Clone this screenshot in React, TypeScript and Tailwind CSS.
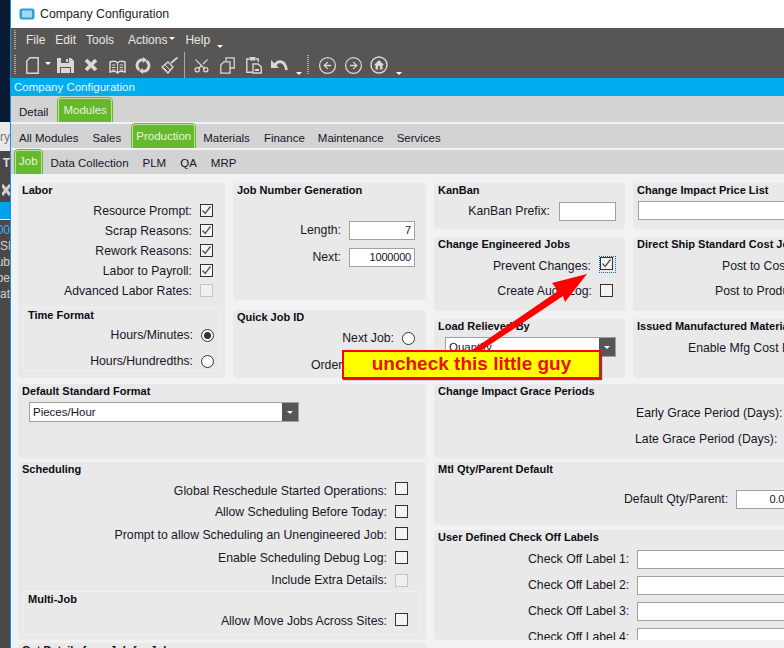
import { CircleArrowLeft, CircleArrowRight, Scissors } from 'lucide-react'
import type { ReactNode } from 'react'

function Check({ on, off, focus, lift = 'mb-[2px]' }: { on?: boolean; off?: boolean; focus?: boolean; lift?: string }) {
  const box = (
    <span
      className={`flex h-[13px] w-[13px] items-center justify-center border ${off ? 'border-[#c4c4c4] bg-[#f1f1f1]' : 'border-[#333333] bg-[#f4f4f4]'}`}
    >
      {on && (
        <svg width="11" height="11" viewBox="0 0 11 11">
          <path d="M1.5 5.5 L4.2 8.5 L9.5 1.5" fill="none" stroke="#555555" strokeWidth="1.4" />
        </svg>
      )}
    </span>
  )
  if (focus) return <span className="-my-[2px] -mr-[3px] mb-[1px] border border-dotted border-[#1565c0] pb-[2px] pr-[2px]">{box}</span>
  return <span className={lift}>{box}</span>
}

function Radio({ on }: { on?: boolean }) {
  return (
    <span className="flex h-[13px] w-[13px] items-center justify-center rounded-full border border-[#333333] bg-white">
      {on && <span className="h-[7px] w-[7px] rounded-full bg-[#333333]" />}
    </span>
  )
}

function Input({ value, className }: { value?: string; className: string }) {
  return (
    <span className={`flex h-[19px] items-center justify-end border border-[#a0a0a0] bg-white px-[3px] text-[11px] tracking-[-0.2px] ${className}`}>
      {value}
    </span>
  )
}

function Combo({ value, className }: { value: string; className: string }) {
  return (
    <span className={`flex h-[20px] items-center border border-[#a0a0a0] bg-white pl-[3px] text-[11.5px] ${className}`}>
      <span className="flex-1 pt-px">{value}</span>
      <span className="flex h-full w-[16px] items-center justify-center bg-[#585654]">
        <span className="h-0 w-0 border-x-[3px] border-t-[3px] border-x-transparent border-t-white" />
      </span>
    </span>
  )
}

function Row({ label, h = 20, pr = 12, gap = 8, children }: { label: string; h?: number; pr?: number; gap?: number; children: ReactNode }) {
  return (
    <div className="flex items-center justify-end whitespace-nowrap" style={{ height: h, paddingRight: pr, columnGap: gap }}>
      <span>{label}</span>
      {children}
    </div>
  )
}

function Panel({ title, className, children }: { title: string; className: string; children?: ReactNode }) {
  return (
    <div className={`shrink-0 overflow-hidden rounded-[4px] bg-[#e9e9e9] ${className}`}>
      <div className="whitespace-nowrap px-1 text-[11px] font-bold leading-[14px] text-[#0c0c14]">{title}</div>
      {children}
    </div>
  )
}

function Tab({ label, className = 'px-[7px] pt-[6px]' }: { label: string; className?: string }) {
  return <span className={`flex h-full items-center ${className}`}>{label}</span>
}

function ActiveTab({ label, className }: { label: string; className: string }) {
  return (
    <span className={`flex items-center rounded-t-[3px] border border-b-0 border-[#b9e69a] bg-[#66b82c] px-[3px] text-[#e6f7d8] outline outline-1 outline-[#66b82c] ${className}`}>
      {label}
    </span>
  )
}

function Grip({ className = '' }: { className?: string }) {
  return <span className={`h-[20px] w-[2px] bg-[repeating-linear-gradient(to_bottom,#a8a8a8_0,#a8a8a8_1px,transparent_1px,transparent_2px)] ${className}`} />
}

function Chevron({ className = '' }: { className?: string }) {
  return <span className={`h-0 w-0 border-x-[3px] border-t-[3px] border-x-transparent border-t-white ${className}`} />
}

function Toolbar() {
  const c = '#d8d8d8'
  return (
    <div className="flex h-[26px] items-center">
      <Grip />
      <svg width="13" height="17" viewBox="0 0 13 17" className="ml-[10px]">
        <path d="M4 .8H12.200V16.200H.8V4z" fill="none" stroke={c} strokeWidth="1.400" />
      </svg>
      <Chevron className="mb-1 ml-[6px]" />
      <svg width="17" height="17" viewBox="0 0 17 17" className="ml-[6px]">
        <path d="M0 1h14l3 3v12H0z" fill={c} />
        <path d="M4 1h8v5H4z" fill="#585654" />
        <path d="M9 2h2v3H9z" fill={c} />
        <path d="M3 10h11v6H3z" fill="#585654" />
        <path d="M4 11h9v5H4z" fill={c} />
      </svg>
      <svg width="14" height="14" viewBox="0 0 14 14" className="ml-[10px]">
        <path d="M2 2 L12 12 M12 2 L2 12" stroke={c} strokeWidth="3.800" />
      </svg>
      <svg width="17" height="14" viewBox="0 0 17 14" className="ml-[11px] mt-1">
        <path d="M1 2c3-1 6-1 7.500 1 1.500-2 4.500-2 7.500-1v10c-3-1-6-1-7.500 1-1.500-2-4.500-2-7.500-1z" fill="none" stroke={c} strokeWidth="1.500" />
        <path d="M8.500 3v9M3 5h3.500M3 7.500h3.500M3 10h3.500M10.500 5H14M10.500 7.500H14M10.500 10H14" stroke={c} />
      </svg>
      <svg width="16" height="17" viewBox="0 0 16 17" className="ml-[9px]">
        <path d="M8 2.800A5.600 5.600 0 0 0 4.500 13" fill="none" stroke={c} strokeWidth="2.800" />
        <path d="M8 14.200A5.600 5.600 0 0 0 11.500 4" fill="none" stroke={c} strokeWidth="2.800" />
        <path d="M8 0v6L12 3zM8 17v-6L4 14z" fill={c} />
      </svg>
      <svg width="17" height="17" viewBox="0 0 17 17" className="ml-[10px]">
        <path d="M16.500 .5 L10 6" stroke={c} strokeWidth="1.800" />
        <path d="M7 5 L12 10 L7 16 L1 10z" fill="none" stroke={c} strokeWidth="1.400" />
        <path d="M4 8 L9 13 M3 11l3 3" stroke={c} />
      </svg>
      <span className="ml-[6px] h-[26px] w-px bg-[#a8a8a8]" />
      <Scissors size={17} color={c} strokeWidth={1.800} className="ml-[8px] -rotate-90" />
      <svg width="15" height="17" viewBox="0 0 15 17" className="ml-[10px]">
        <path d="M6 4V.8H14.200V11H10" fill="none" stroke={c} strokeWidth="1.300" />
        <path d="M4 4.800H10V16.200H.8V8z" fill="none" stroke={c} strokeWidth="1.300" />
      </svg>
      <svg width="16" height="18" viewBox="0 0 16 18" className="ml-[11px]">
        <path d="M3 3H.8v13.200H6M10 3h2.200v3" fill="none" stroke={c} strokeWidth="1.400" />
        <path d="M3.500 1h6v3.500h-6z" fill={c} />
        <path d="M7 8h5l3.300 3v6H7z" fill="none" stroke={c} strokeWidth="1.400" />
        <path d="M9 13h4v2H9z" fill={c} />
      </svg>
      <svg width="17" height="14" viewBox="0 0 17 14" className="ml-[9px]">
        <path d="M4 7C7 2 14 2 15.500 12" fill="none" stroke={c} strokeWidth="2.800" />
        <path d="M0 2V10H8z" fill={c} />
      </svg>
      <Chevron className="ml-[8px] mt-4" />
      <Grip className="ml-[5px]" />
      <CircleArrowLeft size={19} color={c} strokeWidth={1.600} className="ml-[9px]" />
      <CircleArrowRight size={19} color={c} strokeWidth={1.600} className="ml-[7px]" />
      <svg width="18" height="18" viewBox="0 0 18 18" className="ml-[7px]">
        <circle cx="9" cy="9" r="8" fill="none" stroke={c} strokeWidth="1.400" />
        <path d="M9 4 L14 9 H12.500 V13.500 H5.500 V9 H4z" fill={c} />
        <path d="M8 10h2v3.500H8z" fill="#585654" />
      </svg>
      <Chevron className="ml-[8px] mt-4" />
    </div>
  )
}

function LeftStrip() {
  return (
    <div className="flex w-[11px] shrink-0 flex-col border-r border-[#1e90e0] text-[12px] leading-[16px]">
      <div className="h-[122px] bg-[#061a33]" />
      <div className="flex h-[29px] items-center justify-end overflow-hidden bg-[#e9e9e9] text-[#777777]">ry</div>
      <div className="flex h-[51px] flex-col items-end justify-between overflow-hidden bg-[#4a4846] pb-[6px] pt-[4px] font-bold text-[#dddddd]">
        <span>T</span>
        <svg width="8" height="12" viewBox="0 0 8 12">
          <path d="M0 1 L8 11 M8 1 L0 11" stroke="#cfcfcf" strokeWidth="3" />
        </svg>
      </div>
      <div className="h-[17px] bg-[#00a2e8]" />
      <div className="h-[1px] bg-white" />
      <div className="flex flex-1 flex-col items-end overflow-hidden bg-[#4a4846] pt-[2px] text-[#d0d0d0]">
        <span className="text-[#3db4f2]">00</span>
        <span className="self-start">SM</span>
        <span>ub</span>
        <span>pe</span>
        <span>at</span>
      </div>
    </div>
  )
}

export default function App() {
  return (
    <div className="relative flex h-[648px] w-[784px] overflow-hidden bg-white font-['Liberation_Sans',Arial,sans-serif] text-[12.25px] text-[#1a1428]">
      <LeftStrip />
      <div className="flex min-w-0 flex-1 flex-col">
        <div className="flex h-[28px] items-center gap-[5px] pl-[8px] text-[12.3px] text-[#222222]">
          <svg width="16" height="12" viewBox="0 0 16 12">
            <rect x="0.500" y="0.500" width="15" height="11" rx="2.500" fill="#2a9fd8" />
            <rect x="3" y="2.500" width="10" height="7" fill="#9ed8f2" />
          </svg>
          <span>Company Configuration</span>
        </div>

        <div className="flex h-[50px] flex-col bg-[#585654] text-[12px] text-[#e8e8e8]">
          <div className="flex h-[24px] items-center">
            <Grip className="ml-[3px]" />
            <span className="ml-[10px]">File</span>
            <span className="ml-[10px]">Edit</span>
            <span className="ml-[10px]">Tools</span>
            <span className="ml-[14px]">Actions</span>
            <Chevron className="mb-1 ml-[2px]" />
            <span className="ml-[10px]">Help</span>
            <Chevron className="ml-[7px] mt-3" />
          </div>
          <div className="pl-[3px]">
            <Toolbar />
          </div>
        </div>

        <div className="flex h-[18px] items-center bg-[#00adef] pl-[3px] pt-px text-[11.5px] text-[#e8f8ff]">Company Configuration</div>

        <div className="flex h-[26px] items-end bg-[#d3d3d3] pl-[1px] text-[11.5px]">
          <Tab label="Detail" className="px-[7px] pt-[8px]" />
          <ActiveTab label="Modules" className="ml-[3px] h-[24px] px-[4px]" />
        </div>
        <div className="h-[2px] bg-[#f2f2f4]" />
        <div className="flex h-[24px] items-end bg-[#d3d3d3] pl-px text-[11.5px]">
          <Tab label="All Modules" />
          <Tab label="Sales" />
          <ActiveTab label="Production" className="ml-[4px] mr-px h-[24px]" />
          <Tab label="Materials" />
          <Tab label="Finance" />
          <Tab label="Maintenance" className="pl-[6px] pr-[7px] pt-[6px]" />
          <Tab label="Services" className="pl-[6px] pr-[7px] pt-[6px]" />
        </div>
        <div className="h-[2px] bg-[#f2f2f4]" />
        <div className="flex h-[24px] items-end bg-[#d3d3d3] pl-[4px] text-[11.5px]">
          <ActiveTab label="Job" className="mr-[2px] h-[24px] pb-[2px]" />
          <Tab label="Data Collection" className="px-[7px] pt-[4px]" />
          <Tab label="PLM" className="px-[7px] pt-[4px]" />
          <Tab label="QA" className="px-[7px] pt-[4px]" />
          <Tab label="MRP" className="px-[7px] pt-[4px]" />
        </div>

        <div className="flex min-h-0 flex-1 gap-[8px] bg-[#f2f2f4] pl-[7px] pt-[9px]">
          <div className="flex w-[408px] shrink-0 flex-col">
            <div className="flex gap-[8px]">
              <Panel title="Labor" className="h-[195px] w-[207px]">
                <div className="pt-[4px]">
                  <Row label="Resource Prompt:"><Check on /></Row>
                  <Row label="Scrap Reasons:"><Check on /></Row>
                  <Row label="Rework Reasons:"><Check on /></Row>
                  <Row label="Labor to Payroll:"><Check on /></Row>
                  <Row label="Advanced Labor Rates:"><Check off /></Row>
                </div>
                <div className="mx-[5px] mt-[6px] h-[64px] rounded-[3px] border border-[#f0f0f0]">
                  <div className="px-1 text-[11px] font-bold leading-[14px] text-[#0c0c14]">Time Format</div>
                  <Row label="Hours/Minutes:" h={26} pr={5}><Radio on /></Row>
                  <Row label="Hours/Hundredths:" h={26} pr={5}><Radio /></Row>
                </div>
              </Panel>
              <div className="flex flex-col gap-[10px]">
                <Panel title="Job Number Generation" className="h-[117px] w-[193px]">
                  <div className="pt-[21px]">
                    <Row label="Length:" h={25} pr={11}><Input value="7" className="w-[66px]" /></Row>
                    <Row label="Next:" h={29} pr={11}><Input value="1000000" className="w-[66px]" /></Row>
                  </div>
                </Panel>
                <Panel title="Quick Job ID" className="h-[68px] w-[193px]">
                  <div className="pt-[3px]">
                    <Row label="Next Job:" h={22} pr={11}><Radio /></Row>
                    <div className="flex h-[32px] items-center pl-[78px]">Order</div>
                  </div>
                </Panel>
              </div>
            </div>
            <Panel title="Default Standard Format" className="mt-[6px] h-[75px] w-[408px]">
              <div className="pl-[11px] pt-[4px]">
                <Combo value="Pieces/Hour" className="w-[270px]" />
              </div>
            </Panel>
            <Panel title="Scheduling" className="mt-[3px] h-[178px] w-[408px]">
              <div className="pt-[4px]">
                <Row label="Global Reschedule Started Operations:" h={22} pr={18}><Check lift="mb-[5px]" /></Row>
                <Row label="Allow Scheduling Before Today:" h={20} pr={18}><Check /></Row>
                <Row label="Prompt to allow Scheduling an Unengineered Job:" h={26} pr={18}><Check lift="mb-[4px]" /></Row>
                <Row label="Enable Scheduling Debug Log:" h={21} pr={18}><Check /></Row>
                <Row label="Include Extra Details:" h={22} pr={18}><Check off lift="mb-0" /></Row>
              </div>
              <div className="mx-[5px] h-[44px] rounded-[3px] border border-[#f0f0f0]">
                <div className="px-1 text-[11px] font-bold leading-[14px] text-[#0c0c14]">Multi-Job</div>
                <Row label="Allow Move Jobs Across Sites:" h={30} pr={12}><Check lift="mb-[4px]" /></Row>
              </div>
            </Panel>
            <Panel title="Get Details from Job for Job" className="mt-[3px] h-[30px] w-[408px]" />
          </div>

          <div className="flex w-[400px] shrink-0 flex-col">
            <div className="flex gap-[8px]">
              <Panel title="KanBan" className="h-[46px] w-[191px]">
                <div className="pt-[5px]">
                  <Row label="KanBan Prefix:" h={19} pr={9} gap={9}><Input className="w-[57px]" /></Row>
                </div>
              </Panel>
              <Panel title="Change Impact Price List" className="h-[46px] w-[200px]">
                <div className="pl-[5px] pt-[4px]"><Input className="w-[190px]" /></div>
              </Panel>
            </div>
            <div className="mt-[8px] flex gap-[8px]">
              <Panel title="Change Engineered Jobs" className="h-[74px] w-[191px]">
                <div className="pt-[3px]">
                  <Row label="Prevent Changes:" h={24} pr={12}><Check on focus /></Row>
                  <Row label="Create Audit Log:" h={27} pr={12}><Check /></Row>
                </div>
              </Panel>
              <Panel title="Direct Ship Standard Cost Job" className="h-[74px] w-[200px]">
                <div className="pt-[3px]">
                  <div className="flex h-[24px] items-center whitespace-nowrap pl-[89px]">Post to Cost</div>
                  <div className="flex h-[27px] items-center whitespace-nowrap pl-[82px]">Post to Product</div>
                </div>
              </Panel>
            </div>
            <div className="mt-[8px] flex gap-[8px]">
              <Panel title="Load Relieved By" className="h-[59px] w-[191px]">
                <div className="pl-[11px] pt-[4px]">
                  <Combo value="Quantity" className="w-[171px]" />
                </div>
              </Panel>
              <Panel title="Issued Manufactured Material" className="h-[59px] w-[200px]">
                <div className="flex h-[24px] items-center whitespace-nowrap pl-[55px] pt-[6px]">Enable Mfg Cost Elements</div>
              </Panel>
            </div>
            <Panel title="Change Impact Grace Periods" className="mt-[6px] h-[75px] w-[400px]">
              <div className="pt-[2px]">
                <div className="flex h-[26px] items-center whitespace-nowrap pl-[202px]">Early Grace Period (Days):</div>
                <div className="flex h-[26px] items-center whitespace-nowrap pl-[201px]">Late Grace Period (Days):</div>
              </div>
            </Panel>
            <Panel title="Mtl Qty/Parent Default" className="mt-[3px] h-[63px] w-[400px]">
              <div className="flex h-[34px] items-center gap-[8px] whitespace-nowrap pl-[190px] pt-[12px]">
                <span>Default Qty/Parent:</span>
                <Input value="0.00" className="w-[58px] shrink-0" />
              </div>
            </Panel>
            <Panel title="User Defined Check Off Labels" className="mt-[5px] h-[110px] w-[400px]">
              <div className="flex flex-col gap-[7px] pt-[6px]">
                {['Check Off Label 1:', 'Check Off Label 2:', 'Check Off Label 3:', 'Check Off Label 4:'].map(label => (
                  <div key={label} className="flex items-center gap-[8px] whitespace-nowrap pl-[94px]">
                    <span>{label}</span>
                    <Input className="w-[200px] shrink-0" />
                  </div>
                ))}
              </div>
            </Panel>
          </div>
        </div>
      </div>

      <svg width="784" height="648" viewBox="0 0 784 648" className="pointer-events-none absolute left-0 top-0">
        <path d="M587 274 L552 283 L558 291 L472 350 L482 350 L563 296 L565 302z" fill="#ff0000" />
      </svg>
      <div className="absolute left-[342px] top-[350px] flex h-[29px] w-[259px] items-center justify-center border-2 border-[#ff0000] bg-[#ffff00] text-[19px] font-bold text-[#e81010] shadow-[1px_1px_1px_#555555]">
        uncheck this little guy
      </div>
    </div>
  )
}
